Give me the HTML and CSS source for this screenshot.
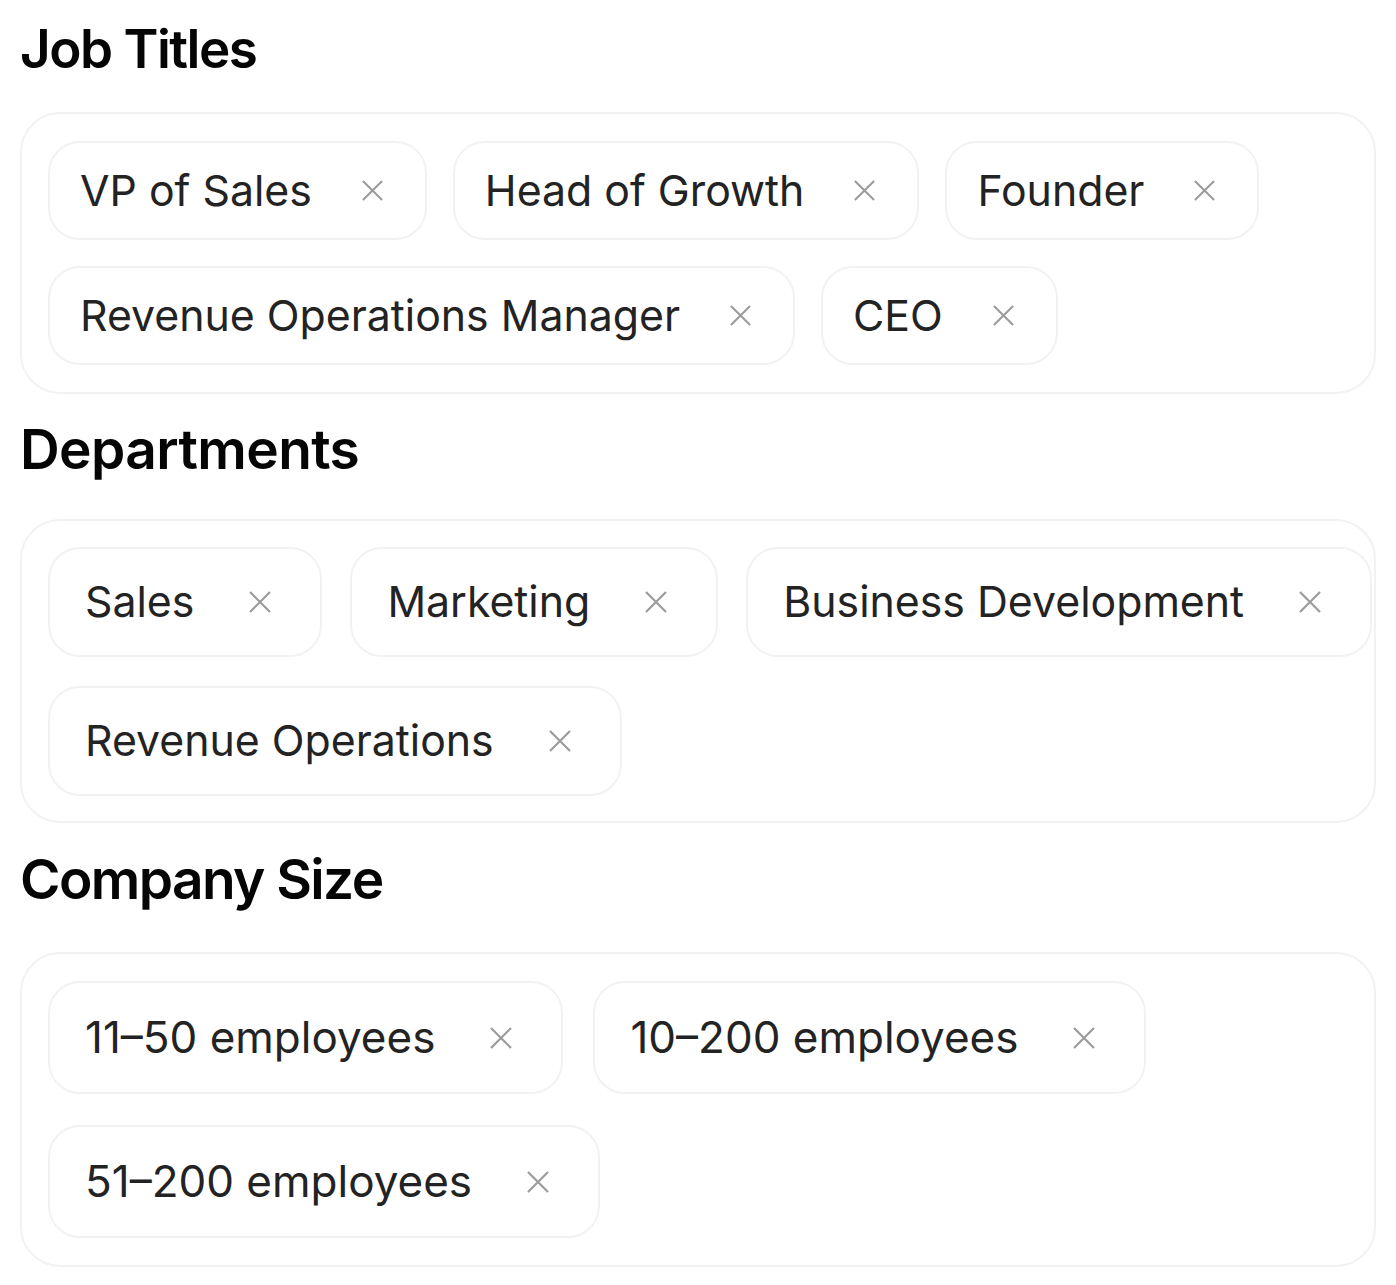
FILE: index.html
```html
<!DOCTYPE html>
<html lang="en">
<head>
<meta charset="utf-8">
<title>Filters</title>
<link rel="stylesheet" href="styles.css">
</head>
<body>
<section class="group g1">
  <h2 class="title">Job Titles</h2>
  <div class="box">
    <span class="chip"><span class="label">VP of Sales</span><svg class="x" viewBox="0 0 24 24"><path d="M2 2L22 22M22 2L2 22"/></svg></span>
    <span class="chip"><span class="label">Head of Growth</span><svg class="x" viewBox="0 0 24 24"><path d="M2 2L22 22M22 2L2 22"/></svg></span>
    <span class="chip"><span class="label">Founder</span><svg class="x" viewBox="0 0 24 24"><path d="M2 2L22 22M22 2L2 22"/></svg></span>
    <span class="chip"><span class="label">Revenue Operations Manager</span><svg class="x" viewBox="0 0 24 24"><path d="M2 2L22 22M22 2L2 22"/></svg></span>
    <span class="chip"><span class="label">CEO</span><svg class="x" viewBox="0 0 24 24"><path d="M2 2L22 22M22 2L2 22"/></svg></span>
  </div>
</section>
<section class="group g2">
  <h2 class="title">Departments</h2>
  <div class="box">
    <span class="chip"><span class="label">Sales</span><svg class="x" viewBox="0 0 24 24"><path d="M2 2L22 22M22 2L2 22"/></svg></span>
    <span class="chip"><span class="label">Marketing</span><svg class="x" viewBox="0 0 24 24"><path d="M2 2L22 22M22 2L2 22"/></svg></span>
    <span class="chip"><span class="label">Business Development</span><svg class="x" viewBox="0 0 24 24"><path d="M2 2L22 22M22 2L2 22"/></svg></span>
    <span class="chip"><span class="label">Revenue Operations</span><svg class="x" viewBox="0 0 24 24"><path d="M2 2L22 22M22 2L2 22"/></svg></span>
  </div>
</section>
<section class="group g3">
  <h2 class="title">Company Size</h2>
  <div class="box">
    <span class="chip"><span class="label">11–50 employees</span><svg class="x" viewBox="0 0 24 24"><path d="M2 2L22 22M22 2L2 22"/></svg></span>
    <span class="chip"><span class="label">10–200 employees</span><svg class="x" viewBox="0 0 24 24"><path d="M2 2L22 22M22 2L2 22"/></svg></span>
    <span class="chip"><span class="label">51–200 employees</span><svg class="x" viewBox="0 0 24 24"><path d="M2 2L22 22M22 2L2 22"/></svg></span>
  </div>
</section>
</body>
</html>
```
FILE: styles.css
```css
html, body {
  margin: 0;
  background: #ffffff;
}
body {
  font-family: Inter, "Noto Sans", "Liberation Sans", sans-serif;
  color: #222222;
  padding: 17px 20px 0 20px;
  width: 1356px;
  box-sizing: content-box;
}
.title {
  margin: 0;
  font-weight: 560;
  color: #050505;
  line-height: 1.21;
  letter-spacing: -0.6px;
}
.box {
  border: 2px solid #f2f2f2;
  border-radius: 40px;
  display: flex;
  flex-wrap: wrap;
  align-content: flex-start;
}
.chip {
  display: inline-flex;
  align-items: center;
  border: 2px solid #f2f2f2;
  border-radius: 32px;
  background: #fff;
  white-space: nowrap;
  box-sizing: border-box;
}
.label {
  line-height: 1.21;
  letter-spacing: 0;
  color: #232323;
}
.x {
  display: block;
  fill: none;
  stroke: #9c9c9c;
  stroke-width: 2.2;
  flex: none;
}

/* Job Titles */
.g1 .title { font-size: 53px; letter-spacing: -1.5px; margin-bottom: 31px; }
.g1 .box { padding: 27px 13px 27px 26px; gap: 26px; }
.g1 .chip { height: 99px; padding: 0 41px 0 30px; }
.g1 .label { font-size: 42.8px; }
.g1 .x { width: 23px; height: 23px; margin-left: 49px; }

/* Departments */
.g2 { margin-top: 22px; }
.g2 .title { font-size: 55px; margin-bottom: 36px; }
.g2 .box { padding: 26px 0 25px 26px; gap: 29px 28px; }
.g2 .chip { height: 110px; padding: 0 48px 0 35px; }
.g2 .label { font-size: 42.8px; }
.g2 .x { width: 24px; height: 24px; margin-left: 54px; }

/* Company Size */
.g3 { margin-top: 23px; }
.g3 .title { font-size: 55px; letter-spacing: -1.6px; margin-bottom: 40px; }
.g3 .box { padding: 27px 13px 27px 26px; gap: 31px 30px; }
.g3 .chip { height: 113px; padding: 0 48px 0 35px; }
.g3 .label { font-size: 44px; }
.g3 .x { width: 24px; height: 24px; margin-left: 54px; }
```
